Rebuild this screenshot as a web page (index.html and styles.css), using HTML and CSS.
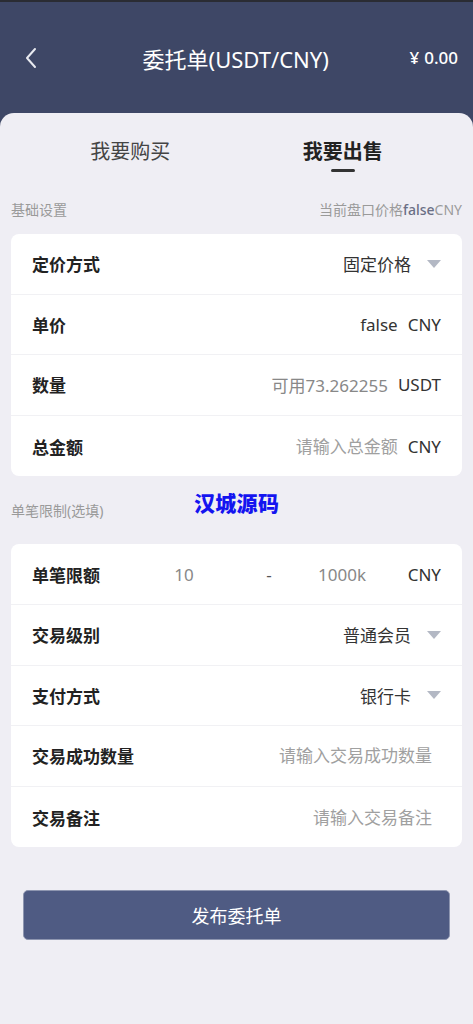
FILE: index.html
```html
<!DOCTYPE html>
<html lang="zh-CN">

<head>
  <meta charset="UTF-8">
  <meta name="viewport" content="width=device-width, initial-scale=1.0">
  <title>委托单(USDT/CNY)</title>
  <link rel="stylesheet" href="styles.css">
</head>

<body>
  <header class="topbar">
    <span class="back">
      <svg viewBox="0 0 14 24" fill="none" stroke="currentColor" stroke-width="2" stroke-linecap="round" stroke-linejoin="round">
        <polyline points="11,3 3,12 11,21"></polyline>
      </svg>
    </span>
    <h1 class="title">委托单(USDT/CNY)</h1>
    <span class="balance"><span class="yen">¥</span>0.00</span>
  </header>

  <main class="panel">
    <nav class="tabs">
      <span class="tab">我要购买</span>
      <span class="tab active">我要出售</span>
    </nav>

    <div class="section-head">
      <span>基础设置</span>
      <span>当前盘口价格<b class="price">false</b>CNY</span>
    </div>

    <section class="card">
      <div class="row">
        <span class="label">定价方式</span>
        <span class="value">固定价格</span>
        <i class="caret"></i>
      </div>
      <div class="row">
        <span class="label">单价</span>
        <span class="value">false</span>
        <span class="unit">CNY</span>
      </div>
      <div class="row">
        <span class="label">数量</span>
        <span class="value muted">可用73.262255</span>
        <span class="unit">USDT</span>
      </div>
      <div class="row">
        <span class="label">总金额</span>
        <input class="field" placeholder="请输入总金额">
        <span class="unit">CNY</span>
      </div>
    </section>

    <div class="section-head">
      <span>单笔限制(选填)</span>
      <span class="mark">汉城源码</span>
    </div>

    <section class="card">
      <div class="row">
        <span class="label range-label">单笔限额</span>
        <span class="min">10</span>
        <span class="dash">-</span>
        <span class="max">1000k</span>
        <span class="unit push">CNY</span>
      </div>
      <div class="row">
        <span class="label">交易级别</span>
        <span class="value">普通会员</span>
        <i class="caret"></i>
      </div>
      <div class="row">
        <span class="label">支付方式</span>
        <span class="value">银行卡</span>
        <i class="caret"></i>
      </div>
      <div class="row inset">
        <span class="label">交易成功数量</span>
        <input class="field" placeholder="请输入交易成功数量">
      </div>
      <div class="row inset">
        <span class="label">交易备注</span>
        <input class="field" placeholder="请输入交易备注">
      </div>
    </section>

    <button class="submit" type="button">发布委托单</button>
  </main>
</body>

</html>
```

FILE: styles.css
```css
:root {
  --navy: #3e4766;
  --bg: #efeef4;
  --ink: #333333;
  --label: #222222;
  --muted: #9a9a9a;
  --line: #f1f1f4;
  --button: #4f5b83;
}

* {
  box-sizing: border-box;
}

body {
  margin: 0;
  font-family: "Noto Sans", "Noto Sans CJK SC", sans-serif;
  color: var(--ink);
  background: var(--navy);
  min-height: 1024px;
}

.topbar {
  height: 113px;
  display: flex;
  align-items: center;
  padding: 0 15px 0 24px;
  color: #ffffff;
  border-top: 2px solid #2a2c33;
}

.back {
  width: 16px;
  height: 24px;
  display: flex;
  color: #e8eaf0;
}

.back svg {
  width: 14px;
  height: 24px;
}

.title {
  flex: 1;
  margin: 0;
  text-align: center;
  font-size: 22px;
  font-weight: 400;
  padding-left: 22px;
}

.balance {
  font-size: 17px;
  font-weight: 500;
}

.yen {
  margin-right: 5px;
}

.panel {
  background: var(--bg);
  border-radius: 14px 14px 0 0;
  min-height: 911px;
  padding: 0 11px 60px;
  display: flex;
  flex-direction: column;
}

.tabs {
  display: flex;
  height: 71px;
  padding: 22px 13px 0;
}

.tab {
  flex: 1;
  text-align: center;
  font-size: 20px;
  line-height: 34px;
  color: #444444;
  height: 36px;
  position: relative;
}

.tab.active {
  font-weight: 700;
  color: #222222;
}

.tab.active::after {
  content: "";
  position: absolute;
  left: calc(50% - 12px);
  bottom: -1px;
  width: 24px;
  height: 3px;
  border-radius: 2px;
  background: #333333;
}

.section-head {
  display: flex;
  justify-content: space-between;
  align-items: center;
  height: 50px;
  font-size: 14px;
  color: var(--muted);
  position: relative;
}

.section-head .price {
  color: #6a6f85;
  font-weight: 500;
}

.card + .section-head {
  height: 68px;
}

.mark {
  position: absolute;
  left: 183px;
  top: 11px;
  font-size: 21px;
  font-weight: 900;
  color: #1414f0;
  letter-spacing: 0.3px;
}

.card {
  background: #ffffff;
  border-radius: 8px;
}

.row {
  height: 60.6px;
  display: flex;
  align-items: center;
  padding: 0 21px;
  font-size: 17px;
  border-bottom: 1px solid var(--line);
}

.row:last-child {
  border-bottom: none;
}

.row.inset {
  padding-right: 30px;
}

.label {
  font-weight: 700;
  color: var(--label);
  margin-right: auto;
}

.value {
  color: var(--ink);
}

.value.muted {
  color: #888888;
}

.unit {
  margin-left: 10px;
  color: var(--ink);
}

.field {
  border: none;
  outline: none;
  font: inherit;
  text-align: right;
  width: 200px;
  padding: 0;
  color: var(--ink);
  background: transparent;
}

.field::placeholder {
  color: #a0a0a0;
}

.caret {
  width: 0;
  height: 0;
  margin-left: 16px;
  border-left: 7px solid transparent;
  border-right: 7px solid transparent;
  border-top: 8px solid #b3b8c4;
}

.range-label {
  margin-right: 0;
  width: 112px;
}

.min,
.dash,
.max {
  text-align: center;
  color: #888888;
}

.min {
  width: 80px;
}

.dash {
  width: 90px;
  color: #555555;
}

.max {
  width: 56px;
}

.push {
  margin-left: auto;
}

.submit {
  margin: 43px 12px 0;
  height: 50px;
  border: 1px solid #8e96b0;
  border-radius: 5px;
  background: var(--button);
  color: #ffffff;
  font: inherit;
  font-size: 18px;
  cursor: pointer;
}
```
